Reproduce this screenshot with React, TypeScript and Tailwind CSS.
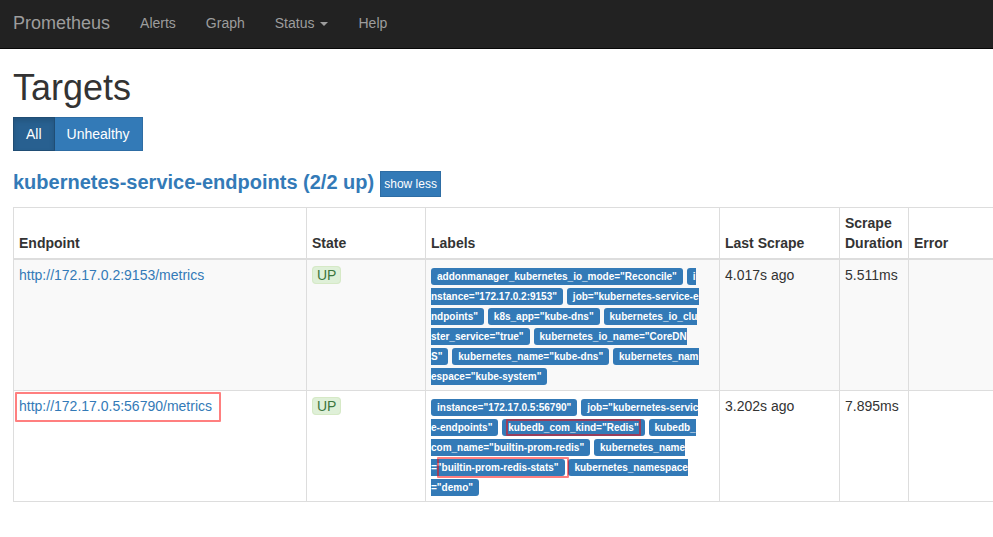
import type { ReactNode } from "react";

function Marked({ children, box }: { children: ReactNode; box: string }) {
  return (
    <span className="relative">
      {children}
      <span aria-hidden="true" className={`pointer-events-none absolute rounded-[1px] border-2 border-[#ff0000]/50 ${box}`} />
    </span>
  );
}

function Label({ children }: { children: ReactNode }) {
  return (
    <span className="rounded-[3px] bg-[#337ab7] px-[6px] py-[3px] text-[10px] leading-none font-bold text-white">
      {children}
    </span>
  );
}

type Target = {
  url: string;
  marked?: boolean;
  labels: ReactNode[];
  last: string;
  duration: string;
};

const targets: Target[] = [
  {
    url: "http://172.17.0.2:9153/metrics",
    labels: [
      'addonmanager_kubernetes_io_mode="Reconcile"',
      'i\nnstance="172.17.0.2:9153"',
      'job="kubernetes-service-e\nndpoints"',
      'k8s_app="kube-dns"',
      'kubernetes_io_clu\nster_service="true"',
      'kubernetes_io_name="CoreDN\nS"',
      'kubernetes_name="kube-dns"',
      'kubernetes_nam\nespace="kube-system"',
    ],
    last: "4.017s ago",
    duration: "5.511ms",
  },
  {
    url: "http://172.17.0.5:56790/metrics",
    marked: true,
    labels: [
      'instance="172.17.0.5:56790"',
      'job="kubernetes-servic\ne-endpoints"',
      <Marked box="-inset-x-[2px] -inset-y-[3px]">kubedb_com_kind="Redis"</Marked>,
      'kubedb_\ncom_name="builtin-prom-redis"',
      <>
        {"kubernetes_name\n="}
        <Marked box="-right-[10px] left-0 -inset-y-[5px]">"builtin-prom-redis-stats"</Marked>
      </>,
      'kubernetes_namespace\n="demo"',
    ],
    last: "3.202s ago",
    duration: "7.895ms",
  },
];

const navLink = "px-[15px] pt-[13px] pb-[15px] text-[#9d9d9d] hover:text-white";
const th = "border border-[#ddd] border-b-2 p-[5px] text-left align-bottom font-bold last:border-r-0";
const td = "border border-[#ddd] p-[5px] text-left align-top last:border-r-0";

export default function App() {
  return (
    <div className="min-h-screen overflow-hidden bg-white font-['Liberation_Sans',Arial,sans-serif] text-[14px] leading-[20px] text-[#333]">
      <nav className="flex items-center border-b border-[#080808] bg-[#222] pl-[13px]">
        <a href="#" className="pt-[13px] pb-[15px] pr-[15px] text-[18px] text-[#9d9d9d] hover:text-white">
          Prometheus
        </a>
        <a href="#alerts" className={navLink}>Alerts</a>
        <a href="#graph" className={navLink}>Graph</a>
        <button type="button" className={`flex items-center gap-[6px] ${navLink}`}>
          Status
          <span className="mt-[2px] border-x-4 border-t-4 border-x-transparent border-t-current" />
        </button>
        <a href="#help" className={navLink}>Help</a>
      </nav>

      <main className="pl-[13px]">
        <h1 className="mt-[19px] text-[36px] leading-[40px]">Targets</h1>
        <div className="mt-[9px] flex text-white">
          <button type="button" className="z-10 border border-[#204d74] bg-[#286090] px-[12px] py-[6px] shadow-[inset_0_3px_5px_rgba(0,0,0,0.125)]">
            All
          </button>
          <button type="button" className="-ml-px border border-[#2e6da4] bg-[#337ab7] px-[12px] py-[6px]">
            Unhealthy
          </button>
        </div>

        <div className="mt-[20px] flex items-start gap-[6px]">
          <h2 className="text-[20px] leading-[22px] font-bold">
            <a href="#job" className="text-[#337ab7]">kubernetes-service-endpoints (2/2 up)</a>
          </h2>
          <button type="button" className="border border-[#2e6da4] bg-[#337ab7] px-[3px] py-[3px] text-[12px] leading-[18px] text-white">
            show less
          </button>
        </div>

        <table className="mt-[10px] w-full table-fixed border-collapse">
          <colgroup>
            <col className="w-[293px]" />
            <col className="w-[119px]" />
            <col className="w-[294px]" />
            <col className="w-[120px]" />
            <col className="w-[69px]" />
            <col />
          </colgroup>
          <thead>
            <tr>
              <th className={th}>Endpoint</th>
              <th className={th}>State</th>
              <th className={th}>Labels</th>
              <th className={th}>Last Scrape</th>
              <th className={th}>Scrape Duration</th>
              <th className={th}>Error</th>
            </tr>
          </thead>
          <tbody>
            {targets.map((t) => (
              <tr key={t.url} className="odd:bg-[#f9f9f9]">
                <td className={td}>
                  <a href={t.url} className="text-[#337ab7]">
                    {t.marked ? <Marked box="-right-[9px] -left-[4px] -top-[6px] -bottom-[8px]">{t.url}</Marked> : t.url}
                  </a>
                </td>
                <td className={td}>
                  <span className="rounded-[4px] border border-[#d6e9c6] bg-[#dff0d8] px-[4px] text-[#3c763d]">UP</span>
                </td>
                <td className={`${td} break-all whitespace-pre-line`}>
                  {t.labels.map((label, i) => (
                    <span key={i}>
                      <Label>{label}</Label>{" "}
                    </span>
                  ))}
                </td>
                <td className={td}>{t.last}</td>
                <td className={td}>{t.duration}</td>
                <td className={td} />
              </tr>
            ))}
          </tbody>
        </table>
      </main>
    </div>
  );
}
